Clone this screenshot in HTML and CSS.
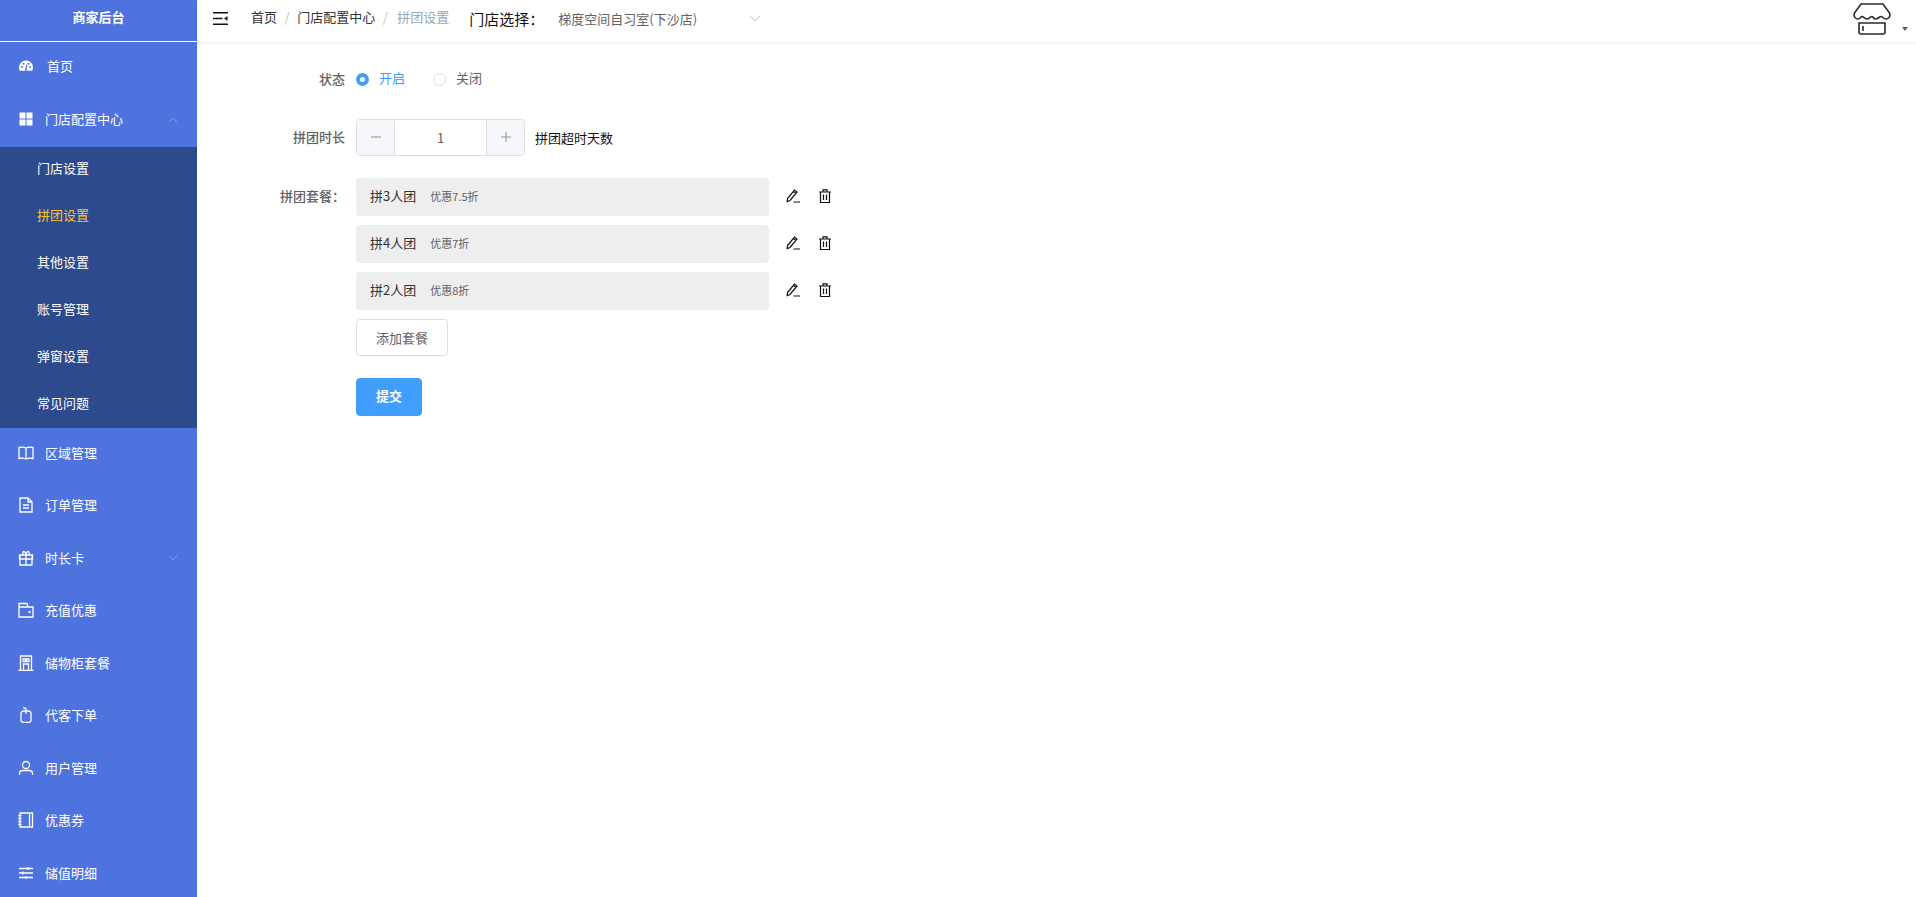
FILE: index.html
```html
<!DOCTYPE html>
<html lang="zh-CN">
<head>
<meta charset="utf-8">
<title>拼团设置</title>
<link rel="stylesheet" href="styles.css">
</head>
<body>
<div class="app">
  <aside class="sidebar">
    <div class="brand">商家后台</div>
    <nav>
      <a class="item home"><svg class="ico" viewBox="0 0 16 16"><path fill="#fff" d="M8 2.500A7 7 0 0 0 1 9.500c0 1.200.3 2.300.8 3.200h12.400c.5-.9.8-2 .8-3.200a7 7 0 0 0-7-7z"/><g fill="#4e73df"><circle cx="4" cy="9" r="1"/><circle cx="5.500" cy="5.800" r="1"/><circle cx="12" cy="9" r="1"/><circle cx="10.500" cy="5.800" r="1"/><path d="M7 12.700 8.400 6.500l.9.2-.6 6z"/></g></svg><span>首页</span></a>
      <a class="item"><svg class="ico" viewBox="0 0 16 16"><path fill="#fff" d="M1.500 1.500h6v6h-6zM8.500 1.500h6v6h-6zM1.500 8.500h6v6h-6zM8.500 8.500h6v6h-6z"/></svg><span>门店配置中心</span><svg class="arrow" viewBox="0 0 10 6"><path d="M1 5l4-4 4 4"/></svg></a>
      <div class="submenu">
        <a class="subitem">门店设置</a>
        <a class="subitem active">拼团设置</a>
        <a class="subitem">其他设置</a>
        <a class="subitem">账号管理</a>
        <a class="subitem">弹窗设置</a>
        <a class="subitem">常见问题</a>
      </div>
      <a class="item"><svg class="ico line" viewBox="0 0 16 16"><path d="M8 3v11M8 3C6 2 3 2 1 2.500v11C3 13 6 13 8 14c2-1 5-1 7-.5v-11C13 2 10 2 8 3z"/></svg><span>区域管理</span></a>
      <a class="item"><svg class="ico line" viewBox="0 0 16 16"><path d="M2 1h8l4 4v10H2zM10 1v4h4M5 8h6M5 11h6"/></svg><span>订单管理</span></a>
      <a class="item"><svg class="ico line" viewBox="0 0 16 16"><path d="M2 5h12v10H2zM1.500 5h13v4h-13zM8 5v10M8 5C5 5 4 3.500 5 2s3 .5 3 3zM8 5c3 0 4-1.500 3-3S8 2.500 8 5z"/></svg><span>时长卡</span><svg class="arrow" viewBox="0 0 10 6"><path d="M1 1l4 4 4-4"/></svg></a>
      <a class="item"><svg class="ico line" viewBox="0 0 16 16"><path d="M1 1.500h8l1 3.500h5v10H1zM1 5h9"/><circle cx="11.500" cy="10" r=".5"/></svg><span>充值优惠</span></a>
      <a class="item"><svg class="ico line" viewBox="0 0 16 16"><path d="M2.500 1h11v14.500h-11zM.5 15.500h15M5 4h2.500v2.500H5zM8.500 4H11v2.500H8.500zM5.500 9h5v6.500h-5z"/></svg><span>储物柜套餐</span></a>
      <a class="item"><svg class="ico line" viewBox="0 0 16 16"><path d="M3 6.500a2.500 2.500 0 0 1 2.500-2.500h5A2.500 2.500 0 0 1 13 6.500v6.500a2.500 2.500 0 0 1-2.500 2.500h-5A2.500 2.500 0 0 1 3 13zM8 4V2.500C8 1.300 6.500.7 5 .7M8 4v3"/></svg><span>代客下单</span></a>
      <a class="item"><svg class="ico line" viewBox="0 0 16 16"><circle cx="8" cy="5" r="3.500"/><path d="M1.500 15v-1.500C1.500 11 3.500 10.500 5 10.500h6c1.500 0 3.500.5 3.500 3V15"/></svg><span>用户管理</span></a>
      <a class="item"><svg class="ico line" viewBox="0 0 16 16"><path d="M2 1h12.500v14H2zM11.500 1v14M.3 3.500h3.200M.3 6.500h3.200M.3 9.500h3.200M.3 12.500h3.200"/></svg><span>优惠券</span></a>
      <a class="item"><svg class="ico line" viewBox="0 0 16 16"><path d="M1 3.500h14M1 8h14M1 12.500h14"/><path d="M10 2v3M5 6.500v3M8 11v3"/></svg><span>储值明细</span></a>
    </nav>
  </aside>
  <div class="main">
    <header class="topbar">
      <svg class="hamburger" viewBox="0 0 15 13"><path d="M0 .75h15M0 6.500h9.500M0 12.250h15"/><path class="fillpath" d="M11 6.500l3.500-2.500v5z"/></svg>
      <div class="crumbs">
        <span>首页</span><i>/</i><span>门店配置中心</span><i>/</i><span class="current">拼团设置</span>
      </div>
      <div class="store">门店选择：</div>
      <div class="select">梯度空间自习室(下沙店)<svg class="select-arrow" viewBox="0 0 12 7"><path d="M1 1l5 5 5-5"/></svg></div>
      <div class="avatar">
        <svg class="shop" viewBox="0 0 38 32"><path d="M8 1h22l6.500 9c1.500 3-1 6-3.500 6-2.500 0-3.500-2.500-5-2.500S25 16 22.500 16 20.500 13.500 19 13.500 16 16 14 16s-3.500-2.500-5-2.500S7.500 16 5 16c-2.500 0-5-3-3.500-6zM6 20h26v9a2 2 0 0 1-2 2H8a2 2 0 0 1-2-2zM10 23v5"/></svg>
        <span class="caret"></span>
      </div>
    </header>
    <form class="form">
      <div class="row radio-row">
        <label class="label">状态</label>
        <div class="radio on"><span class="dot"></span><span class="radio-text">开启</span></div>
        <div class="radio"><span class="dot"></span><span class="radio-text">关闭</span></div>
      </div>
      <div class="row stepper-row">
        <label class="label">拼团时长</label>
        <div class="stepper"><span class="step"><svg class="step-ico" viewBox="0 0 12 12"><path d="M1 6h10"/></svg></span><span class="value">1</span><span class="step"><svg class="step-ico" viewBox="0 0 12 12"><path d="M1 6h10M6 1v10"/></svg></span></div>
        <span class="hint">拼团超时天数</span>
      </div>
      <div class="row packages-row">
        <label class="label pkg-label">拼团套餐：</label>
        <div class="packages">
          <div class="pkg"><div class="pkg-box"><b>拼3人团</b><em>优惠7.5折</em></div><svg class="act" viewBox="0 0 14 14"><path d="M1.500 9.500 8.500 1l2.500 2-7 8.500-2.800 1zM7.500 2.500 10 4.500M7.500 13H14"/></svg><svg class="act" viewBox="0 0 14 14"><path d="M1 3h12M2.500 3v10.500h9V3M5 3V.8h4V3M5.500 5.500v5.500M8.500 5.500v5.500"/></svg></div>
          <div class="pkg"><div class="pkg-box"><b>拼4人团</b><em>优惠7折</em></div><svg class="act" viewBox="0 0 14 14"><path d="M1.500 9.500 8.500 1l2.500 2-7 8.500-2.800 1zM7.500 2.500 10 4.500M7.500 13H14"/></svg><svg class="act" viewBox="0 0 14 14"><path d="M1 3h12M2.500 3v10.500h9V3M5 3V.8h4V3M5.500 5.500v5.500M8.500 5.500v5.500"/></svg></div>
          <div class="pkg"><div class="pkg-box"><b>拼2人团</b><em>优惠8折</em></div><svg class="act" viewBox="0 0 14 14"><path d="M1.500 9.500 8.500 1l2.500 2-7 8.500-2.800 1zM7.500 2.500 10 4.500M7.500 13H14"/></svg><svg class="act" viewBox="0 0 14 14"><path d="M1 3h12M2.500 3v10.500h9V3M5 3V.8h4V3M5.500 5.500v5.500M8.500 5.500v5.500"/></svg></div>
          <button type="button" class="btn-add">添加套餐</button>
          <button type="button" class="btn-submit">提交</button>
        </div>
      </div>
    </form>
  </div>
</div>
</body>
</html>
```
FILE: styles.css
```css
* { box-sizing: border-box; }
html, body { margin: 0; height: 100%; overflow: hidden; background: #fff; }
body { font-family: "Noto Sans CJK SC", "Liberation Sans", sans-serif; font-size: 13px; color: #606266; }
.app { display: flex; height: 100vh; }

.sidebar { width: 197px; flex: none; background: #4e73df; color: #fff; overflow: hidden; }
.brand { height: 42px; border-bottom: 1px solid #fff; font-weight: 700; font-size: 13px; line-height: 34px; text-align: center; }
.item { display: flex; align-items: center; height: 52.5px; padding: 0 0 4px 18px; position: relative; color: #fff; }
.item span { padding-bottom: 1px; }
.item.home span { margin-left: 13px; }
.ico { width: 16px; height: 16px; flex: none; margin-right: 11px; }
.ico.line path, .ico.line circle { fill: none; stroke: #fff; stroke-width: 1.300; }
.item.home .ico { margin-right: 0; }
.arrow { width: 10px; height: 6px; position: absolute; left: 168px; top: 22px; fill: none; stroke: #7f9bea; stroke-width: 1; }
.submenu { background: #2c4a8c; }
.subitem { display: flex; align-items: center; height: 46.900px; padding: 0 0 5px 37px; color: #fff; }
.subitem.active { color: #fcc433; }

.main { flex: 1; min-width: 0; }
.topbar { height: 42px; display: flex; align-items: center; box-shadow: 0 1px 3px rgba(0, 21, 41, .08); padding-left: 16px; }
.hamburger { width: 15px; height: 13px; flex: none; margin-top: -5px; fill: none; stroke: #111; stroke-width: 1.500; }
.hamburger .fillpath { fill: #111; stroke: none; }
.crumbs { margin-left: 23px; margin-top: -9px; display: flex; align-items: center; color: #303133; }
.crumbs i { font-style: normal; color: #c0c4cc; margin: 0 7.500px; }
.crumbs .current { color: #97a8be; margin-left: 2px; }
.store { margin-left: 20px; font-size: 15px; color: #111; margin-top: -6px; width: 89px; flex: none; }
.select { font-size: 13px; color: #606266; width: 203px; flex: none; display: flex; align-items: center; justify-content: space-between; margin-top: -6px; }
.select-arrow { width: 12px; height: 7px; fill: none; stroke: #c0c4cc; stroke-width: 1; }
.avatar { margin-left: auto; margin-right: 8px; display: flex; align-items: flex-end; }
.shop { width: 38px; height: 32px; fill: none; stroke: #2a2a2a; stroke-width: 1.600; margin-top: -4px; }
.caret { width: 0; height: 0; border: 3px solid transparent; border-top: 4px solid #5a5e66; border-bottom: 0; margin: 0 0 4px 11px; }

.form { padding-top: 27px; }
.row { display: flex; }
.label { width: 148px; flex: none; text-align: right; font-weight: 500; color: #606266; margin-right: 11px; }
.radio-row { height: 20px; line-height: 20px; align-items: center; margin-bottom: 30px; }
.radio-row .label { padding-bottom: 1px; }
.radio { display: flex; align-items: center; width: 77px; color: #606266; }
.radio-text { padding-bottom: 2px; }
.radio .dot { width: 13px; height: 13px; border: 1px solid #dcdfe6; border-radius: 50%; margin-right: 10px; flex: none; background: #fff; }
.radio.on { color: #409eff; }
.radio.on .dot { border: 4px solid #409eff; }
.stepper-row { align-items: center; height: 37px; margin-bottom: 22px; }
.stepper-row .label { padding-bottom: 2px; }
.stepper { display: flex; width: 169px; height: 37px; border: 1px solid #dcdfe6; border-radius: 4px; overflow: hidden; }
.step { width: 37px; flex: none; background: #f5f7fa; display: flex; align-items: center; justify-content: center; }
.step-ico { width: 12px; height: 12px; fill: none; stroke: #8a9099; stroke-width: 1; margin-bottom: 2px; }
.value { flex: 1; display: flex; align-items: center; justify-content: center; border-left: 1px solid #dcdfe6; border-right: 1px solid #dcdfe6; }
.hint { margin-left: 10px; color: #111; }
.pkg-label { line-height: 36px; }
.packages { display: flex; flex-direction: column; gap: 9px; align-items: flex-start; }
.pkg { display: flex; align-items: center; height: 38px; }
.pkg-box { width: 413px; height: 38px; background: #eee; border-radius: 4px; display: flex; align-items: center; padding: 0 0 3px 14px; }
.pkg-box b { font-weight: 400; color: #333; }
.pkg-box em { font-style: normal; font-size: 11px; color: #606266; margin-left: 14px; padding-top: 1px; }
.act { width: 14px; height: 14px; margin: 0 0 2px 17px; flex: none; fill: none; stroke: #111; stroke-width: 1.200; }
.act + .act { margin-left: 18px; }
.btn-add { width: 92px; height: 37px; border: 1px solid #dcdfe6; border-radius: 4px; background: #fff; color: #606266; font: inherit; padding: 0 0 1px; }
.btn-submit { width: 66px; height: 38px; border: 1px solid #409eff; border-radius: 4px; background: #409eff; color: #fff; font: inherit; font-weight: 700; padding: 0 0 4px; margin-top: 13px; }
```
